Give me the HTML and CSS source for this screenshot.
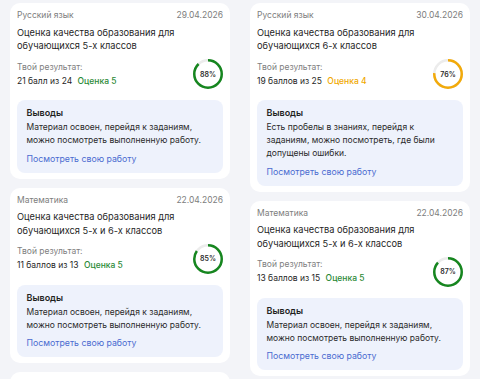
FILE: index.html
```html
<!DOCTYPE html>
<html lang="ru">

<head>
    <meta charset="UTF-8">
    <meta name="viewport" content="width=device-width, initial-scale=1.0">
    <title>Результаты</title>
    <link rel="stylesheet" href="styles.css">
</head>

<body>
    <div class="grid">
        <div class="column">
            <div class="card">
                <div class="cardHead">
                    <span>Русский язык</span>
                    <span>29.04.2026</span>
                </div>
                <div class="cardTitle">Оценка качества образования для обучающихся 5-х классов</div>
                <div class="result">
                    <div>
                        <div class="resultLabel">Твой результат:</div>
                        <div class="resultScore">21 балл из 24 <span class="mark good">Оценка 5</span></div>
                    </div>
                    <div class="ring">
                        <svg viewBox="0 0 30 30">
                            <circle class="track" cx="15" cy="15" r="13.75"></circle>
                            <circle class="bar good" cx="15" cy="15" r="13.75" pathLength="100" stroke-dasharray="88 100"></circle>
                        </svg>
                        <span>88%</span>
                    </div>
                </div>
                <div class="summary">
                    <div class="summaryTitle">Выводы</div>
                    <div class="summaryText">Материал освоен, перейдя к заданиям, можно посмотреть выполненную работу.</div>
                    <a class="summaryLink" href="#">Посмотреть свою работу</a>
                </div>
            </div>

            <div class="card">
                <div class="cardHead">
                    <span>Математика</span>
                    <span>22.04.2026</span>
                </div>
                <div class="cardTitle">Оценка качества образования для обучающихся 5-х и 6-х классов</div>
                <div class="result">
                    <div>
                        <div class="resultLabel">Твой результат:</div>
                        <div class="resultScore">11 баллов из 13 <span class="mark good">Оценка 5</span></div>
                    </div>
                    <div class="ring">
                        <svg viewBox="0 0 30 30">
                            <circle class="track" cx="15" cy="15" r="13.75"></circle>
                            <circle class="bar good" cx="15" cy="15" r="13.75" pathLength="100" stroke-dasharray="85 100"></circle>
                        </svg>
                        <span>85%</span>
                    </div>
                </div>
                <div class="summary">
                    <div class="summaryTitle">Выводы</div>
                    <div class="summaryText">Материал освоен, перейдя к заданиям, можно посмотреть выполненную работу.</div>
                    <a class="summaryLink" href="#">Посмотреть свою работу</a>
                </div>
            </div>

            <div class="card"></div>
        </div>

        <div class="column">
            <div class="card">
                <div class="cardHead">
                    <span>Русский язык</span>
                    <span>30.04.2026</span>
                </div>
                <div class="cardTitle">Оценка качества образования для обучающихся 6-х классов</div>
                <div class="result">
                    <div>
                        <div class="resultLabel">Твой результат:</div>
                        <div class="resultScore">19 баллов из 25 <span class="mark fair">Оценка 4</span></div>
                    </div>
                    <div class="ring">
                        <svg viewBox="0 0 30 30">
                            <circle class="track" cx="15" cy="15" r="13.75"></circle>
                            <circle class="bar fair" cx="15" cy="15" r="13.75" pathLength="100" stroke-dasharray="76 100"></circle>
                        </svg>
                        <span>76%</span>
                    </div>
                </div>
                <div class="summary">
                    <div class="summaryTitle">Выводы</div>
                    <div class="summaryText">Есть пробелы в знаниях, перейдя к заданиям, можно посмотреть, где были допущены ошибки.</div>
                    <a class="summaryLink" href="#">Посмотреть свою работу</a>
                </div>
            </div>

            <div class="card">
                <div class="cardHead">
                    <span>Математика</span>
                    <span>22.04.2026</span>
                </div>
                <div class="cardTitle">Оценка качества образования для обучающихся 5-х и 6-х классов</div>
                <div class="result">
                    <div>
                        <div class="resultLabel">Твой результат:</div>
                        <div class="resultScore">13 баллов из 15 <span class="mark good">Оценка 5</span></div>
                    </div>
                    <div class="ring">
                        <svg viewBox="0 0 30 30">
                            <circle class="track" cx="15" cy="15" r="13.75"></circle>
                            <circle class="bar good" cx="15" cy="15" r="13.75" pathLength="100" stroke-dasharray="87 100"></circle>
                        </svg>
                        <span>87%</span>
                    </div>
                </div>
                <div class="summary">
                    <div class="summaryTitle">Выводы</div>
                    <div class="summaryText">Материал освоен, перейдя к заданиям, можно посмотреть выполненную работу.</div>
                    <a class="summaryLink" href="#">Посмотреть свою работу</a>
                </div>
            </div>
        </div>
    </div>
</body>

</html>
```

FILE: styles.css
```css
body {
    font-family: 'Inter', 'Noto Sans', sans-serif;
    background: #f3f4f8;
    margin: 0;
    padding: 0;
    overflow: hidden;
}

.grid {
    display: flex;
    gap: 20px;
    padding: 3px 10px;
}

.column {
    width: 220px;
    display: flex;
    flex-direction: column;
    gap: 9px;
}

.card {
    background: white;
    border-radius: 10px;
    padding: 6px 7px 6px;
    min-height: 60px;
    box-sizing: border-box;
}

.cardHead {
    display: flex;
    justify-content: space-between;
    font-size: 8.5px;
    line-height: 12px;
    color: #7d7d7d;
}

.cardTitle {
    margin-top: 4.5px;
    font-size: 9.25px;
    line-height: 13.5px;
    color: #1f1f1f;
}

.result {
    display: flex;
    justify-content: space-between;
    align-items: center;
    margin-top: 6.5px;
}

.resultLabel {
    font-size: 8.5px;
    line-height: 12px;
    color: #808080;
}

.resultScore {
    margin-top: 2px;
    font-size: 8.5px;
    line-height: 13px;
    color: #1f1f1f;
}

.mark {
    margin-left: 3px;
    font-weight: 500;
}

.mark.good {
    color: #2b8a36;
}

.mark.fair {
    color: #f0a800;
}

.ring {
    position: relative;
    width: 30px;
    height: 30px;
}

.ring svg {
    width: 30px;
    height: 30px;
    transform: rotate(-90deg);
    display: block;
}

.ring circle {
    fill: none;
    stroke-width: 2.5;
}

.ring .track {
    stroke: #ececec;
}

.ring .bar.good {
    stroke: #16861f;
}

.ring .bar.fair {
    stroke: #f2aa0a;
}

.ring span {
    position: absolute;
    inset: 0;
    display: flex;
    justify-content: center;
    align-items: center;
    font-size: 7px;
    font-weight: 600;
    color: #2a2a2a;
}

.summary {
    margin-top: 11px;
    background: #eef2fc;
    border-radius: 8px;
    padding: 7px 9.5px 8px;
}

.summaryTitle {
    font-size: 9px;
    line-height: 12px;
    font-weight: 600;
    color: #1f1f1f;
}

.summaryText {
    margin-top: 2px;
    font-size: 8.5px;
    line-height: 13px;
    color: #2a2a2a;
}

.summaryLink {
    display: block;
    margin-top: 5.5px;
    font-size: 8.75px;
    line-height: 12px;
    color: #4a6bd0;
    text-decoration: none;
}
```
